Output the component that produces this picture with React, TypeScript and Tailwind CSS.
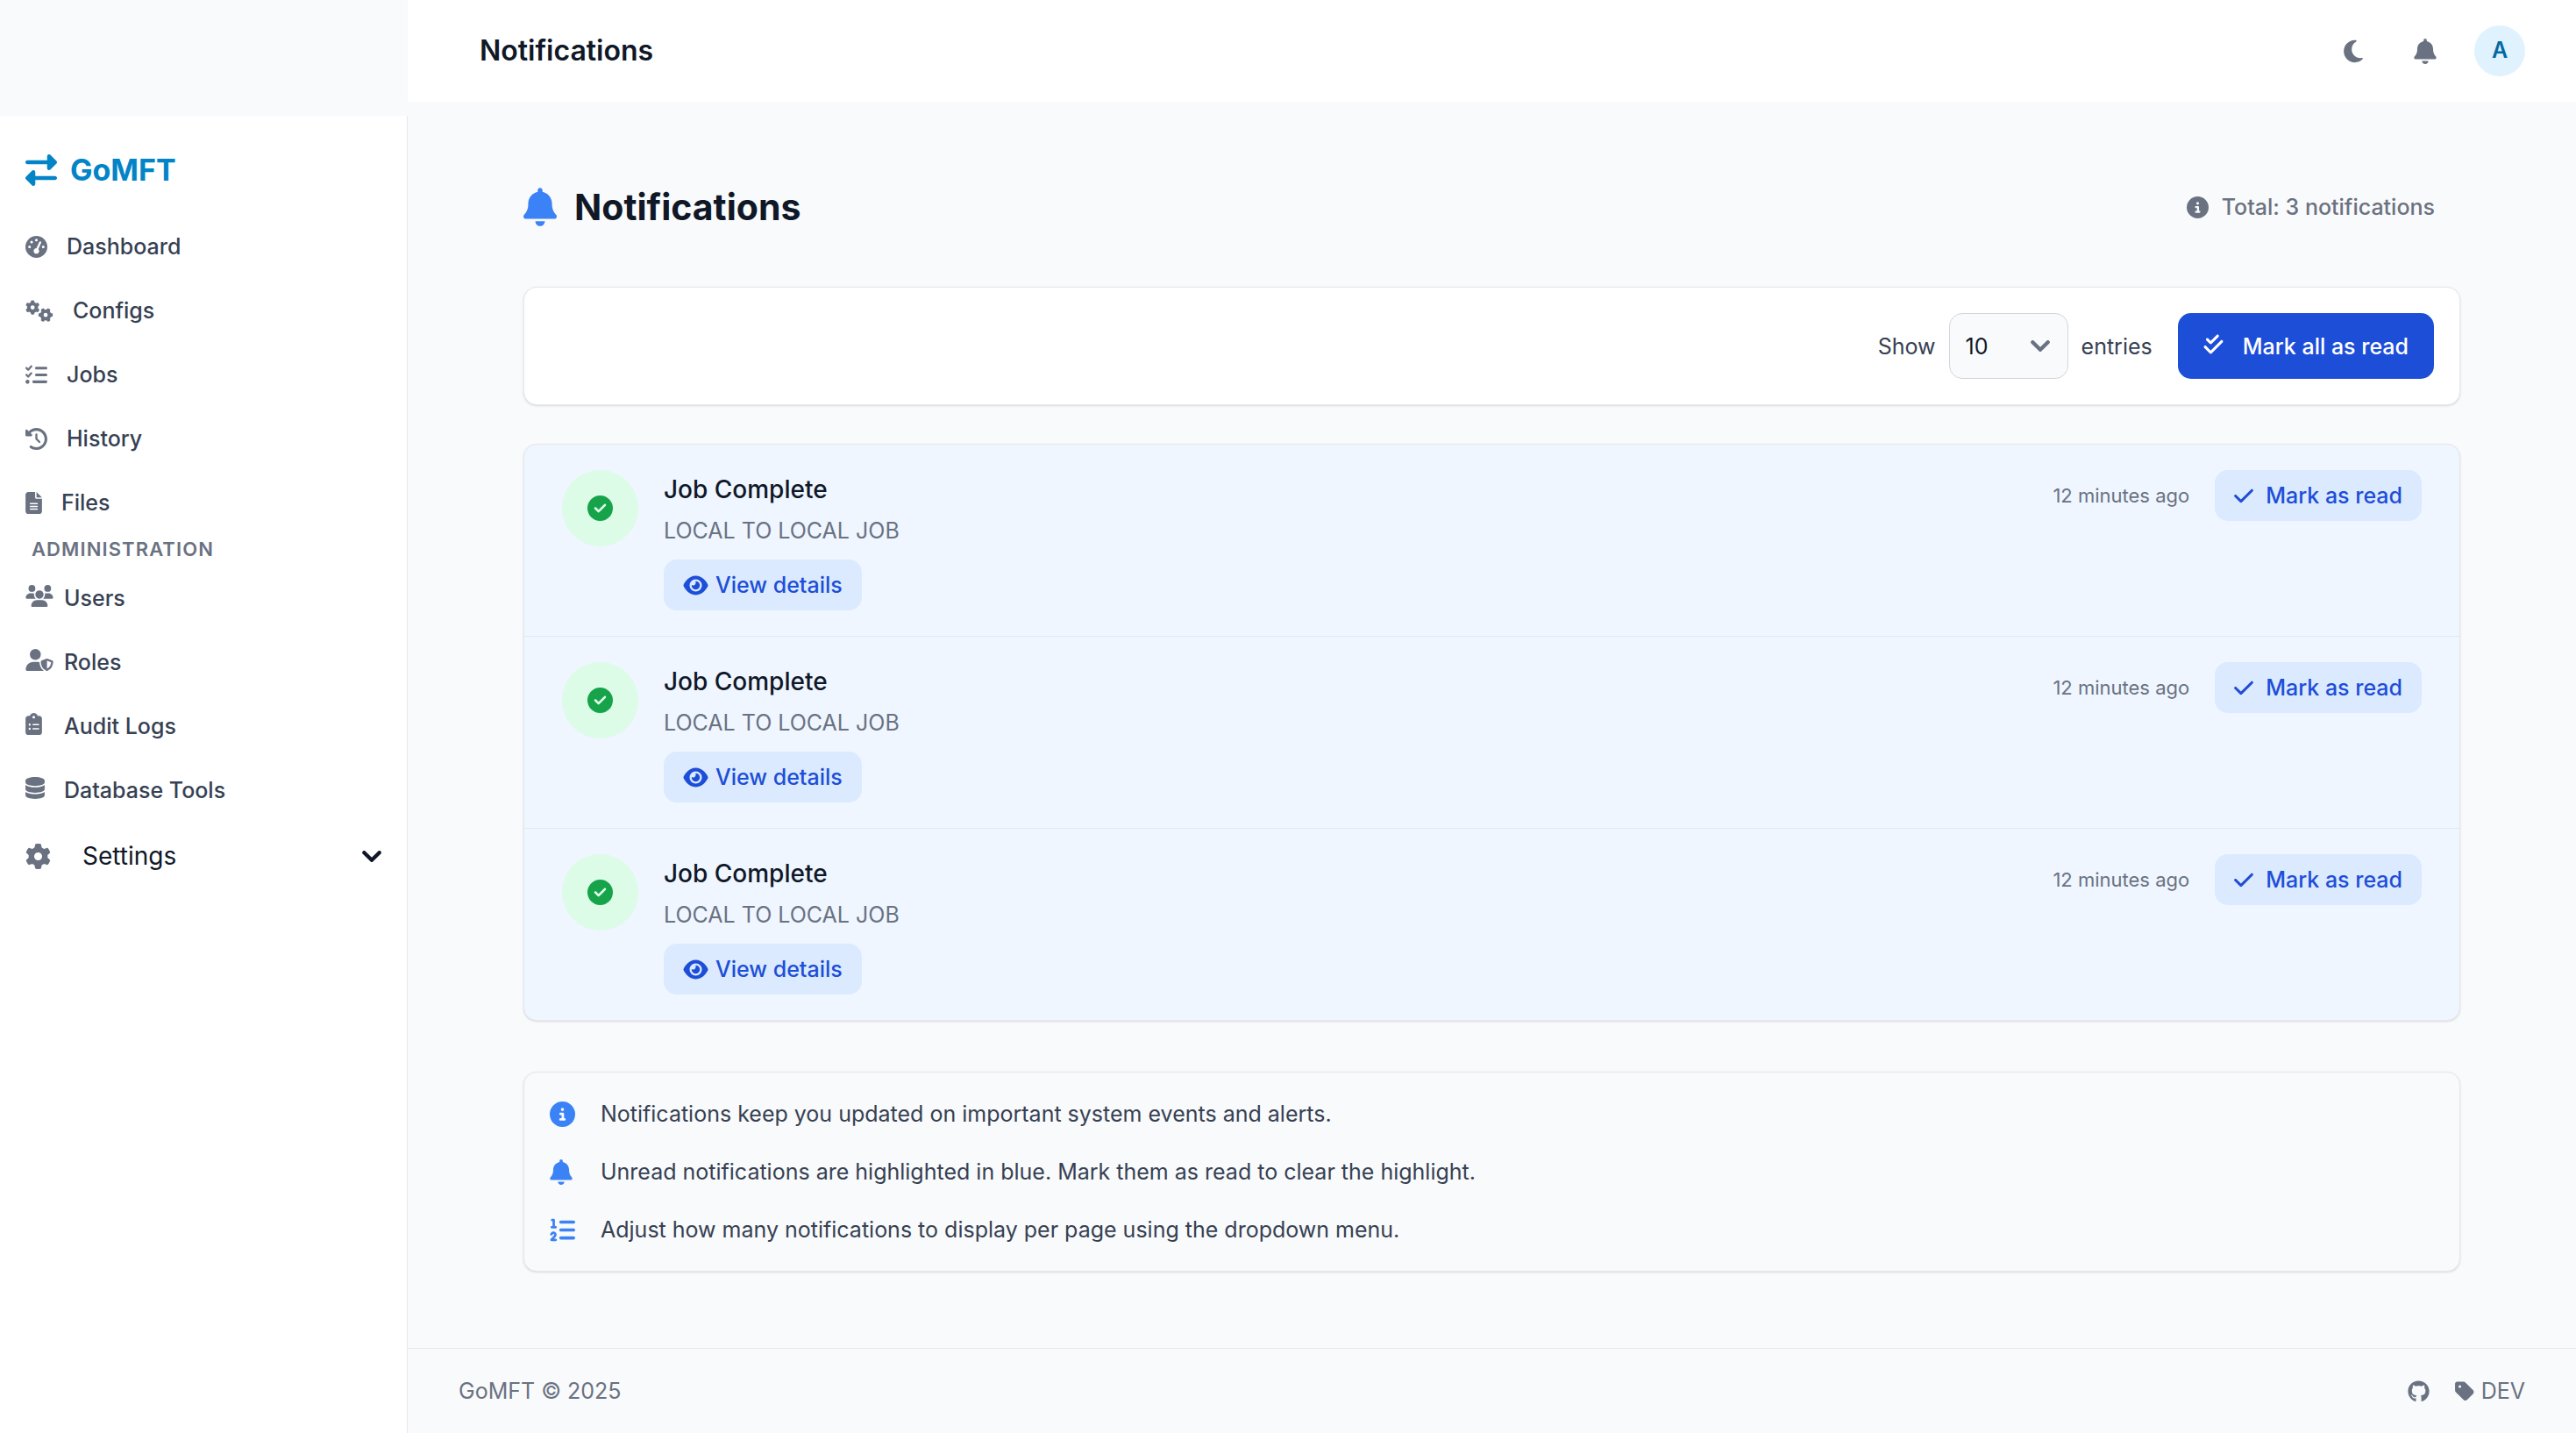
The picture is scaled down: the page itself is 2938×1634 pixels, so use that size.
import type { ReactNode } from "react";
import type { IconType } from "react-icons";
import {
  FaBell, FaCheck, FaCheckDouble, FaCircleCheck, FaCircleInfo, FaClipboardList,
  FaClockRotateLeft, FaDatabase, FaEye, FaFileLines, FaGaugeHigh, FaGear, FaGears, FaGithub,
  FaListCheck, FaListOl, FaMoon, FaRightLeft, FaTag, FaUserShield, FaUsers,
} from "react-icons/fa6";

type IconProps = { icon: IconType; width: string; height?: string };

/* Font Awesome glyphs keep their own advance width, so each one names its box. */
function Glyph({ icon: Icon, width, height = "h-[25px]" }: IconProps) {
  return <Icon aria-hidden className={`${width} ${height} shrink-0`} preserveAspectRatio="xMidYMid meet" />;
}

const mainLinks = [
  { label: "Dashboard", icon: FaGaugeHigh, width: "w-[25px]" },
  { label: "Configs", icon: FaGears, width: "w-[32px]" },
  { label: "Jobs", icon: FaListCheck, width: "w-[25px]" },
  { label: "History", icon: FaClockRotateLeft, width: "w-[25px]" },
  { label: "Files", icon: FaFileLines, width: "w-[19px]" },
];

const adminLinks = [
  { label: "Users", icon: FaUsers, width: "w-[32px]" },
  { label: "Roles", icon: FaUserShield, width: "w-[32px]" },
  { label: "Audit Logs", icon: FaClipboardList, width: "w-[19px]" },
  { label: "Database Tools", icon: FaDatabase, width: "w-[22px]" },
];

const notifications = [1, 2, 3].map((id) => ({
  id,
  title: "Job Complete",
  body: "LOCAL TO LOCAL JOB",
  time: "12 minutes ago",
}));

function Sidebar() {
  return (
    <aside className="flex w-[465px] shrink-0 flex-col pt-[132px]">
      <div className="flex grow flex-col border-r border-gray-200 bg-white">
        <a href="#" className="mt-[36px] flex h-[52px] items-center gap-[15px] pl-[29px] text-[34px] leading-[52px] font-bold text-[#0284c7]">
          <Glyph icon={FaRightLeft} width="w-[36px]" height="h-[36px]" />
          GoMFT
        </a>
        <nav className="mt-[32px] flex flex-col text-[25px] leading-9 font-medium text-gray-700">
          <ul className="flex flex-col gap-[15px]">
            {mainLinks.map((l) => (
              <li key={l.label}>
                <a href="#" className="flex h-[58px] items-center gap-[22px] px-[29px]">
                  <span className="text-gray-500"><Glyph icon={l.icon} width={l.width} /></span>
                  {l.label}
                </a>
              </li>
            ))}
          </ul>
          <h2 className="mt-[10px] px-[36px] text-[22px] leading-[29px] font-semibold tracking-wider text-gray-500 uppercase">
            Administration
          </h2>
          <ul className="mt-[12px] flex flex-col gap-[15px]">
            {adminLinks.map((l) => (
              <li key={l.label}>
                <a href="#" className="flex h-[58px] items-center gap-[8px] px-[29px]">
                  <span className="w-[36px] pb-[5px] text-gray-500"><Glyph icon={l.icon} width={l.width} /></span>
                  {l.label}
                </a>
              </li>
            ))}
          </ul>
          <button type="button" className="mt-[10px] flex h-[72px] items-center px-[29px] text-left text-[28px] leading-[44px] font-normal text-gray-900">
            <span className="text-gray-500"><Glyph icon={FaGear} width="w-[29px]" height="h-[29px]" /></span>
            <span className="grow pl-[36px]">Settings</span>
            <svg aria-hidden viewBox="0 0 10 6" fill="none" className="h-[13px] w-[22px]">
              <path d="m1 1 4 4 4-4" stroke="currentColor" strokeWidth="2" strokeLinecap="round" strokeLinejoin="round" />
            </svg>
          </button>
        </nav>
      </div>
    </aside>
  );
}

function Header() {
  return (
    <header className="flex h-[116px] items-center justify-between bg-white pr-[58px] pl-[82px]">
      <p className="text-[32px] leading-[52px] font-semibold text-gray-900">Notifications</p>
      <div className="flex items-center text-gray-500">
        <button type="button" aria-label="Toggle dark mode" className="mr-[58px]">
          <Glyph icon={FaMoon} width="w-[22px]" height="h-[29px]" />
        </button>
        <button type="button" aria-label="Notifications" className="mr-[43px]">
          <Glyph icon={FaBell} width="w-[26px]" height="h-[29px]" />
        </button>
        <button type="button" aria-label="Account" className="size-[58px] rounded-full bg-sky-100 text-[25px] font-semibold text-[#0369a1]">
          A
        </button>
      </div>
    </header>
  );
}

function Toolbar() {
  return (
    <section className="mt-[58px] flex items-center justify-end rounded-[15px] border border-gray-200 bg-white p-[29px] text-[25px] leading-9 text-gray-700 shadow-sm">
      <label htmlFor="page-size">Show</label>
      <div className="relative mx-[15px]">
        <select
          id="page-size"
          defaultValue="10"
          className="h-[75px] w-[136px] appearance-none rounded-[15px] border border-gray-300 bg-gray-50 pl-[18px] text-gray-900"
        >
          <option>10</option>
          <option>25</option>
          <option>50</option>
        </select>
        <svg aria-hidden viewBox="0 0 10 6" fill="none" className="pointer-events-none absolute top-[31px] right-[21px] h-[13px] w-[22px] text-gray-500">
          <path d="m1 1 4 4 4-4" stroke="currentColor" strokeWidth="2" strokeLinecap="round" strokeLinejoin="round" />
        </svg>
      </div>
      <span>entries</span>
      <button type="button" className="ml-[29px] flex h-[75px] items-center gap-[22px] rounded-[15px] bg-[#1d4ed8] px-[29px] font-medium text-white">
        <span className="pb-[5px]"><Glyph icon={FaCheckDouble} width="w-[23px]" /></span>
        Mark all as read
      </button>
    </section>
  );
}

function PillButton({ children, gap }: { children: ReactNode; gap: string }) {
  return (
    <button type="button" className={`flex h-[58px] items-center rounded-[15px] bg-[#dbeafe] px-[22px] text-[25px] leading-9 font-medium text-[#1d4ed8] ${gap}`}>
      {children}
    </button>
  );
}

function NotificationList() {
  return (
    <ul className="mt-[44px] divide-y divide-gray-200 overflow-hidden rounded-[15px] border border-gray-200 bg-[#eff6ff] shadow-sm">
      {notifications.map((n) => (
        <li key={n.id} className="flex items-start px-[43px] py-[29px]">
          <span className="mr-[29px] flex size-[87px] items-center justify-center rounded-full bg-[#dcfce7] text-[#16a34a]">
            <Glyph icon={FaCircleCheck} width="w-[29px]" height="h-[29px]" />
          </span>
          <div className="flex grow flex-col items-start">
            <h3 className="text-[28px] leading-[44px] font-medium text-gray-900">{n.title}</h3>
            <p className="mt-[7px] mb-[15px] text-[25px] leading-9 text-gray-500">{n.body}</p>
            <PillButton gap="gap-[8px]">
              <Glyph icon={FaEye} width="w-[29px]" />
              View details
            </PillButton>
          </div>
          <div className="flex items-center gap-[29px]">
            <time className="text-[22px] leading-[29px] text-gray-500">{n.time}</time>
            <PillButton gap="gap-[14px]">
              <Glyph icon={FaCheck} width="w-[22px]" />
              Mark as read
            </PillButton>
          </div>
        </li>
      ))}
    </ul>
  );
}

const tips = [
  { icon: FaCircleInfo, width: "w-[29px]", text: "Notifications keep you updated on important system events and alerts." },
  { icon: FaBell, width: "w-[26px]", text: "Unread notifications are highlighted in blue. Mark them as read to clear the highlight." },
  { icon: FaListOl, width: "w-[29px]", text: "Adjust how many notifications to display per page using the dropdown menu." },
];

function Tips() {
  return (
    <ul className="mt-[58px] flex flex-col gap-[22px] rounded-[15px] border border-gray-200 bg-gray-50 px-[29px] py-[25px] shadow-sm">
      {tips.map((t) => (
        <li key={t.text} className="flex h-[44px] items-center text-[25px] leading-9 text-gray-700">
          <span className="w-[58px] text-[#3b82f6]"><Glyph icon={t.icon} width={t.width} height="h-[29px]" /></span>
          {t.text}
        </li>
      ))}
    </ul>
  );
}

export default function App() {
  return (
    <div className="flex min-h-screen bg-gray-50 font-['Inter',sans-serif]">
      <Sidebar />
      <div className="flex min-w-0 grow flex-col">
        <Header />
        <main className="grow pr-[132px] pb-[44px] pl-[132px] pt-[87px]">
          <div className="flex items-center justify-between pr-[29px]">
            <h1 className="flex items-center gap-[20px] text-[41px] leading-[66px] font-bold text-gray-900">
              <span className="text-[#3b82f6]"><Glyph icon={FaBell} width="w-[38px]" height="h-[44px]" /></span>
              Notifications
            </h1>
            <p className="flex items-center gap-[15px] text-[25px] leading-9 font-medium text-gray-500">
              <Glyph icon={FaCircleInfo} width="w-[25px]" />
              Total: 3 notifications
            </p>
          </div>
          <Toolbar />
          <NotificationList />
          <Tips />
        </main>
        <footer className="flex h-[97px] items-center justify-between border-t border-gray-200 pr-[58px] pl-[58px] text-[25px] leading-9 text-gray-500">
          <p>GoMFT © 2025</p>
          <div className="flex items-center gap-[29px]">
            <a href="#" aria-label="GitHub"><Glyph icon={FaGithub} width="w-[25px]" /></a>
            <span className="flex items-center gap-[8px]">
              <Glyph icon={FaTag} width="w-[22px]" />
              DEV
            </span>
          </div>
        </footer>
      </div>
    </div>
  );
}
